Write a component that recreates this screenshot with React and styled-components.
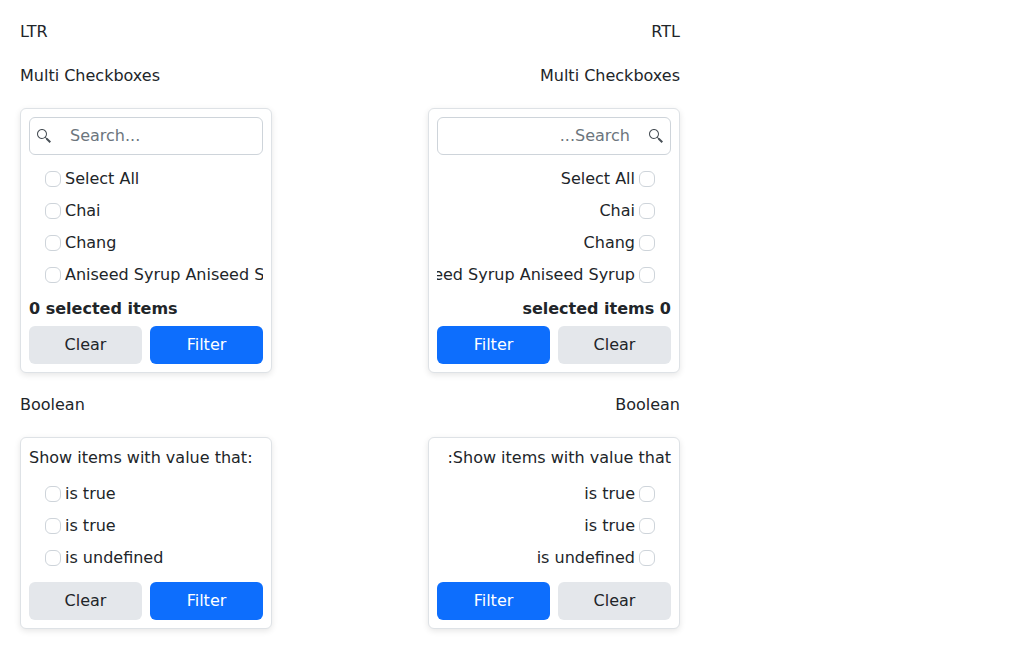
import React from "react";
import styled, { createGlobalStyle } from "styled-components";

const GlobalStyle = createGlobalStyle`
  *, *::before, *::after { box-sizing: border-box; }
  body {
    margin: 0;
    background: #ffffff;
    color: #212529;
    font: 400 16px/24px "DejaVu Sans", sans-serif;
  }
`;

const Page = styled.main`
  display: grid;
  grid-template-columns: repeat(2, minmax(252px, 320px));
  gap: 20px;
  padding: 20px;
`;

const Column = styled.section`
  display: flex;
  flex-direction: column;
  align-items: flex-start;
  gap: 20px;
`;

const Title = styled.p`
  margin: 0;
`;

const Card = styled.form`
  width: 252px;
  padding: 8px;
  border: 1px solid #dee2e6;
  border-radius: 6px;
  background: #ffffff;
  box-shadow: 0 2px 6px rgba(0, 0, 0, 0.1);
`;

const SearchBox = styled.label`
  display: flex;
  align-items: center;
  height: 38px;
  margin-bottom: 8px;
  padding-inline-start: 6px;
  border: 1px solid #ced4da;
  border-radius: 6px;
`;

const SearchGlyph = styled.svg`
  flex: none;
  width: 16px;
  height: 16px;
  fill: #495057;
`;

const SearchInput = styled.input`
  flex: 1;
  min-width: 0;
  height: 24px;
  margin-inline-start: 6px;
  padding: 0 12px;
  border: 0;
  outline: 0;
  background: transparent;
  color: inherit;
  font: inherit;

  &::placeholder {
    color: #6c757d;
    opacity: 1;
  }
`;

const Options = styled.ul`
  margin: 0;
  padding: 0;
  overflow: hidden;
  list-style: none;
`;

const Option = styled.li`
  padding: 4px 16px;
  white-space: nowrap;
`;

const OptionLabel = styled.label`
  display: flex;
  align-items: center;
  gap: 4px;
`;

const Checkbox = styled.input`
  flex: none;
  width: 16px;
  height: 16px;
  margin: 0;
  appearance: none;
  border: 1px solid #ced4da;
  border-radius: 6px;
  background: #ffffff;

  &:checked {
    border-color: #0d6efd;
    background: #0d6efd;
  }
`;

const Summary = styled.p`
  margin: 0;
  padding: 6px 0 5px;
  font-weight: 700;
`;

const Prompt = styled.p`
  margin: 0 0 8px;
`;

const Actions = styled.div`
  display: flex;
  gap: 8px;
  margin-top: ${(p) => (p.$spaced ? "8px" : "0")};
`;

const Button = styled.button`
  flex: 1;
  height: 38px;
  padding: 0 12px;
  border: 0;
  border-radius: 6px;
  background: ${(p) => (p.$primary ? "#0d6efd" : "#e4e7eb")};
  color: ${(p) => (p.$primary ? "#ffffff" : "#212529")};
  font: inherit;
`;

const PRODUCTS = ["Select All", "Chai", "Chang", "Aniseed Syrup Aniseed Syrup"];
const CONDITIONS = ["is true", "is true", "is undefined"];

function OptionList({ items }) {
  return (
    <Options>
      {items.map((item, index) => (
        <Option key={index}>
          <OptionLabel>
            <Checkbox type="checkbox" />
            <span>{item}</span>
          </OptionLabel>
        </Option>
      ))}
    </Options>
  );
}

function FilterActions({ spaced }) {
  return (
    <Actions $spaced={spaced}>
      <Button type="reset">Clear</Button>
      <Button type="button" $primary>Filter</Button>
    </Actions>
  );
}

function FilterColumn({ title, dir }) {
  return (
    <Column dir={dir}>
      <Title>{title}</Title>
      <Title>Multi Checkboxes</Title>
      <Card>
        <SearchBox>
          <SearchGlyph viewBox="0 0 512 512" aria-hidden="true">
            <path d="M365.3 320h-22.7l-26.7-26.7C338.5 265.7 352 230.4 352 192c0-88.4-71.6-160-160-160S32 103.6 32 192s71.6 160 160 160c38.4 0 73.7-13.5 101.3-36.1l26.7 26.7v22.7L434.7 480l45.3-45.3zM64 192c0-70.7 57.3-128 128-128s128 57.3 128 128-57.3 128-128 128S64 262.7 64 192" />
          </SearchGlyph>
          <SearchInput type="text" placeholder="Search..." aria-label="Search" />
        </SearchBox>
        <OptionList items={PRODUCTS} />
        <Summary>0 selected items</Summary>
        <FilterActions />
      </Card>
      <Title>Boolean</Title>
      <Card>
        <Prompt>Show items with value that:</Prompt>
        <OptionList items={CONDITIONS} />
        <FilterActions spaced />
      </Card>
    </Column>
  );
}

export default function App() {
  return (
    <>
      <GlobalStyle />
      <Page>
        <FilterColumn title="LTR" dir="ltr" />
        <FilterColumn title="RTL" dir="rtl" />
      </Page>
    </>
  );
}
